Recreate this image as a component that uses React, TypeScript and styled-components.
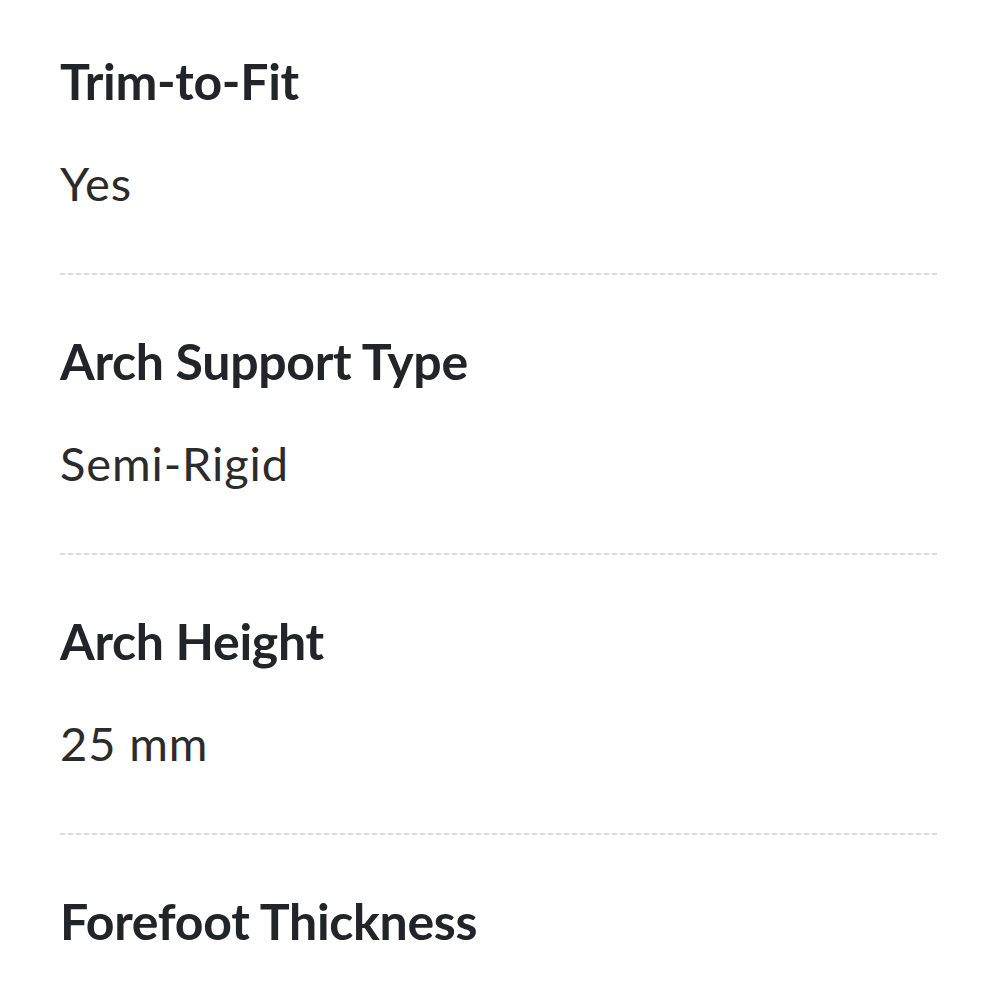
import React from 'react';
import styled, { createGlobalStyle } from 'styled-components';

const GlobalStyle = createGlobalStyle`
  html, body {
    margin: 0;
    padding: 0;
    background: #ffffff;
  }
  body {
    font-family: Lato, "Noto Sans", sans-serif;
    color: #212529;
  }
`;

const SpecList = styled.dl`
  margin: 0;
  padding: 0 60px;
  display: flex;
  flex-direction: column;
`;

const SpecItem = styled.div`
  display: flex;
  flex-direction: column;
  padding-top: 56px;
  padding-bottom: 62px;
  background-image: linear-gradient(to right, #dcdcdc 5px, transparent 5px);
  background-size: 8px 2px;
  background-repeat: repeat-x;
  background-position: left bottom;

  &:first-child {
    padding-top: 51px;
  }
`;

const SpecLabel = styled.dt`
  font-size: 50px;
  font-weight: 700;
  line-height: 60px;
  color: #212529;
  letter-spacing: -0.3px;
`;

const SpecValue = styled.dd`
  margin: 42px 0 0;
  font-size: 47px;
  font-weight: 400;
  line-height: 60px;
  color: #2b2b2b;
  letter-spacing: 0.9px;
`;

type Spec = {
  label: string;
  value?: string;
};

const specs: Spec[] = [
  { label: 'Trim-to-Fit', value: 'Yes' },
  { label: 'Arch Support Type', value: 'Semi-Rigid' },
  { label: 'Arch Height', value: '25 mm' },
  { label: 'Forefoot Thickness' },
];

const App = () => (
  <>
    <GlobalStyle />
    <SpecList>
      {specs.map((spec) => (
        <SpecItem key={spec.label}>
          <SpecLabel>{spec.label}</SpecLabel>
          {spec.value && <SpecValue>{spec.value}</SpecValue>}
        </SpecItem>
      ))}
    </SpecList>
  </>
);

export default App;
